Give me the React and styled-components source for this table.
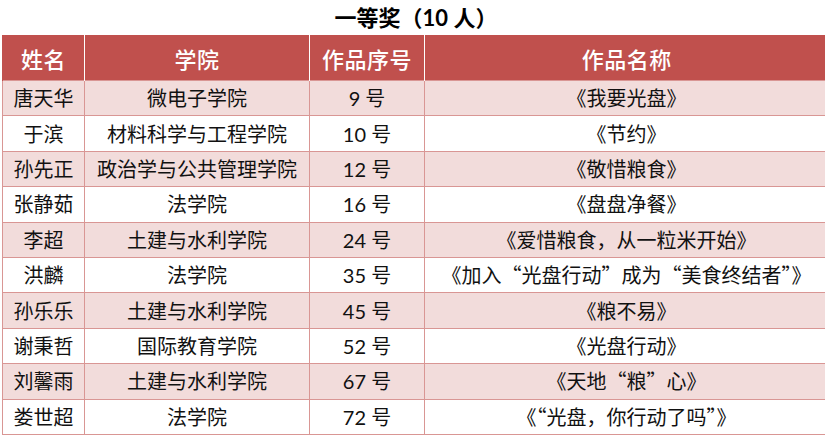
import React from 'react';
import styled, { createGlobalStyle } from 'styled-components';

const GlobalStyle = createGlobalStyle`
  html, body {
    margin: 0;
    padding: 0;
    background: #ffffff;
    overflow: hidden;
  }
`;

const CJK = `"Noto Sans CJK SC", "Noto Sans CJK TC", sans-serif`;
const NUM = `Lato, "Noto Sans CJK SC", sans-serif`;

const Page = styled.div`
  width: 830px;
  padding-left: 2px;
  box-sizing: border-box;
`;

const Title = styled.h1`
  margin: 0;
  height: 35px;
  line-height: 35px;
  text-align: center;
  font-family: ${NUM};
  font-size: 22px;
  font-weight: bold;
  color: #000;
`;

const Table = styled.table`
  width: 826px;
  border-collapse: collapse;
  table-layout: fixed;
`;

const HeadCell = styled.th`
  height: 45px;
  padding: 0;
  background: #c0504d;
  color: #ffffff;
  font-family: ${CJK};
  font-size: 22px;
  font-weight: 500;
  letter-spacing: 0.5px;
  text-align: center;
  border-left: 1px solid #ffffff;
  &:first-child {
    border-left: 1px solid #c0504d;
  }
`;

const Row = styled.tr`
  background: ${(p) => (p.$striped ? '#f2dcdb' : '#ffffff')};
`;

const Cell = styled.td`
  height: 34.4px;
  padding: 0;
  border: 1px solid #d99694;
  text-align: center;
  font-family: ${(p) => (p.$num ? NUM : CJK)};
  font-size: 20px;
  color: #111;
  white-space: nowrap;
  line-height: 1;
`;

const rows = [
  ['唐天华', '微电子学院', '9 号', '《我要光盘》'],
  ['于滨', '材料科学与工程学院', '10 号', '《节约》'],
  ['孙先正', '政治学与公共管理学院', '12 号', '《敬惜粮食》'],
  ['张静茹', '法学院', '16 号', '《盘盘净餐》'],
  ['李超', '土建与水利学院', '24 号', '《爱惜粮食，从一粒米开始》'],
  ['洪麟', '法学院', '35 号', '《加入“光盘行动”成为“美食终结者”》'],
  ['孙乐乐', '土建与水利学院', '45 号', '《粮不易》'],
  ['谢秉哲', '国际教育学院', '52 号', '《光盘行动》'],
  ['刘馨雨', '土建与水利学院', '67 号', '《天地“粮”心》'],
  ['娄世超', '法学院', '72 号', '《“光盘，你行动了吗”》'],
];

const App = () => {
  return (
    <Page>
      <GlobalStyle />
      <Title>一等奖（10 人）</Title>
      <Table>
        <colgroup>
          <col style={{ width: 82 }} />
          <col style={{ width: 225 }} />
          <col style={{ width: 115 }} />
          <col style={{ width: 404 }} />
        </colgroup>
        <thead>
          <tr>
            <HeadCell>姓名</HeadCell>
            <HeadCell>学院</HeadCell>
            <HeadCell>作品序号</HeadCell>
            <HeadCell>作品名称</HeadCell>
          </tr>
        </thead>
        <tbody>
          {rows.map((r, i) => (
            <Row key={r[0]} $striped={i % 2 === 0}>
              <Cell>{r[0]}</Cell>
              <Cell>{r[1]}</Cell>
              <Cell $num>{r[2]}</Cell>
              <Cell>{r[3]}</Cell>
            </Row>
          ))}
        </tbody>
      </Table>
    </Page>
  );
};

export default App;
